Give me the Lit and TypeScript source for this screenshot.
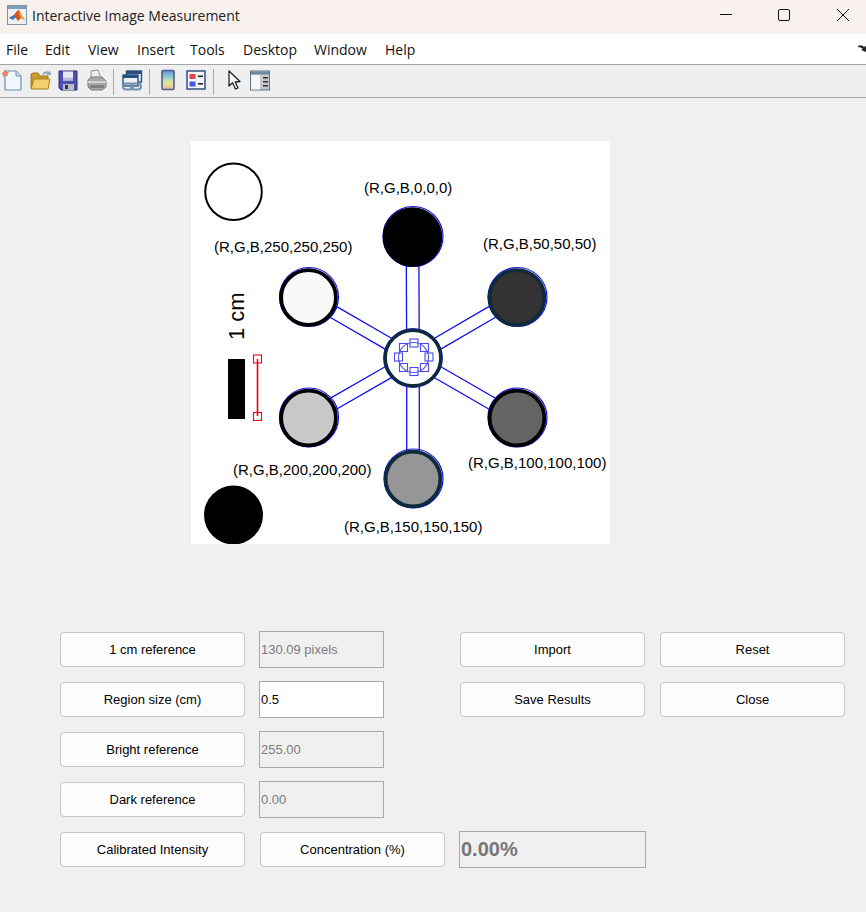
import { LitElement, css, html, svg } from "lit";
import { customElement } from "lit/decorators.js";

const MENUS = [
  ["File", 39],
  ["Edit", 43],
  ["View", 49],
  ["Insert", 53],
  ["Tools", 53],
  ["Desktop", 71],
  ["Window", 71],
  ["Help", 40],
];

const NAVY = "#0f2a3a";
const BLACK = "#000";
const HUB = { x: 413, y: 358, r: 29 };

// outer sample wells, clockwise from the top
const WELLS = [
  { x: 412.5, y: 237, r: 29.5, fill: "#000", ring: BLACK },
  { x: 517, y: 297.5, r: 29, fill: "#333", ring: NAVY },
  { x: 517, y: 418, r: 29, fill: "#646464", ring: BLACK },
  { x: 413, y: 479, r: 29, fill: "#969696", ring: NAVY },
  { x: 308.5, y: 418, r: 29, fill: "#c8c8c8", ring: BLACK },
  { x: 308.5, y: 297.5, r: 29, fill: "#f9f9f9", ring: BLACK },
];

const LABELS = [
  ["(R,G,B,0,0,0)", 364, 193],
  ["(R,G,B,250,250,250)", 214, 252],
  ["(R,G,B,50,50,50)", 483, 249],
  ["(R,G,B,100,100,100)", 468, 468],
  ["(R,G,B,200,200,200)", 233, 475],
  ["(R,G,B,150,150,150)", 344, 532],
] as const;

const HANDLES = [
  [414, 343],
  [424.5, 347.5],
  [429, 357],
  [424.5, 367.5],
  [414, 371.5],
  [403.5, 367.5],
  [398.5, 357],
  [403.5, 347.5],
];

function spokes() {
  return WELLS.flatMap((w) => {
    const dx = w.x - HUB.x;
    const dy = w.y - HUB.y;
    const len = Math.hypot(dx, dy);
    const ux = dx / len;
    const uy = dy / len;
    return [-6.3, 6.3].map((off) => {
      const ox = -uy * off;
      const oy = ux * off;
      const a = HUB.r - 1;
      const b = len - w.r + 1;
      return svg`<line x1=${HUB.x + ux * a + ox} y1=${HUB.y + uy * a + oy} x2=${HUB.x + ux * b + ox} y2=${HUB.y + uy * b + oy} stroke="#1010f0" stroke-width="1.3" />`;
    });
  });
}

function figure() {
  return html`<svg class="figure" width="419" height="403" viewBox="191 141 419 403">
    <rect x="191" y="141" width="419" height="403" fill="#fff" />
    ${spokes()}
    <circle cx="233.5" cy="191.7" r="28.3" fill="#fff" stroke="#000" stroke-width="2" />
    <circle cx="233.5" cy="515" r="29.5" fill="#000" />
    ${WELLS.map(
      (w) => svg`
        <circle cx=${w.x + 0.5} cy=${w.y - 0.5} r=${w.r + 0.5} fill="none" stroke="#1414f0" stroke-width="1.2" />
        <circle cx=${w.x} cy=${w.y} r=${w.r - 1.6} fill=${w.fill} stroke=${w.ring} stroke-width="3.8" />`
    )}
    <circle cx=${HUB.x} cy=${HUB.y} r=${HUB.r + 0.4} fill="none" stroke="#1414f0" stroke-width="1" />
    <circle cx=${HUB.x} cy=${HUB.y} r=${HUB.r - 1.2} fill="#fff" stroke=${NAVY} stroke-width="3.4" />
    <circle cx="413.5" cy="357.5" r="15" fill="none" stroke="#5a5ae0" stroke-width="1.2" />
    ${HANDLES.map(
      ([x, y]) => svg`<rect x=${x - 4} y=${y - 4} width="8" height="8" fill="none" stroke="#4a4ae6" stroke-width="1.1" />`
    )}
    <rect x="228" y="359" width="17" height="60" fill="#000" />
    <line x1="257.5" y1="359" x2="257.5" y2="416" stroke="#f00010" stroke-width="1.6" />
    <rect x="253.5" y="355" width="8" height="8" fill="none" stroke="#f00010" stroke-width="1.1" />
    <rect x="253.5" y="412.5" width="8" height="8" fill="none" stroke="#f00010" stroke-width="1.1" />
    <text class="scale" transform="translate(244 340) rotate(-90)">1 cm</text>
    ${LABELS.map(([t, x, y]) => svg`<text class="label" x=${x} y=${y}>${t}</text>`)}
  </svg>`;
}

const matlabIcon = html`<svg class="logo" width="20" height="20" viewBox="0 0 20 20">
  <rect x="0.5" y="0.5" width="19" height="19" fill="#eef2f6" stroke="#7f93a8" />
  <rect x="1" y="1" width="18" height="3" fill="#7f9cb8" />
  <path d="M2 13 L7 10 L9 7 L12 4.5 L15 11 L18 15 L14 13 L11 16 L8 12 Z" fill="#d9541e" />
  <path d="M2 13 L7 10 L9 12 L6 15 Z" fill="#3a7ab8" />
  <path d="M12 4.5 L15 11 L18 15 L14 13 L12 9 Z" fill="#f0a020" />
</svg>`;

const TOOL_ICONS = {
  file: svg`
    <path d="M5 3 H16 L21 8 V21 Q21 22 20 22 H6 Q5 22 5 21 Z" fill="#eff7fc" stroke="#6d8fb0" stroke-width="1.2" />
    <path d="M16 3 V8 H21" fill="#cfe0ee" stroke="#6d8fb0" />
    <path d="M2 5 L4 4.5 L4.5 2 L6 4 L8.5 4 L7 6 L7.5 8 L5 7 L3 8.5 L3.5 6.5 Z" fill="#f0885a" stroke="#e05a30" stroke-width="0.5" />`,
  open: svg`
    <path d="M3 7 Q3 5 5 5 H10 L12 8 H20 V20 H3 Z" fill="#c99a2e" stroke="#9d7a20" />
    <path d="M3 21 L6 11 H22 L20 21 Z" fill="#f3d06a" stroke="#a8831f" />
    <path d="M14 6 Q17 2 21 4 L22 2 L23 7 L18 7 L20 5.5 Q17 4.5 15 7 Z" fill="#8aa2b8" />`,
  save: svg`
    <path d="M3 3 H21 V22 H5 L3 20 Z" fill="#4a4fb0" stroke="#2c2f78" />
    <rect x="7" y="3.5" width="10" height="9" fill="#e9e9f4" />
    <rect x="7" y="9.5" width="10" height="3" fill="#b8bce0" />
    <rect x="7" y="16" width="11" height="6" fill="#bcbcc6" />
    <rect x="9" y="17" width="3" height="4" fill="#30303a" />`,
  print: svg`
    <path d="M7 3 L14 2 L17 10 L7 11 Z" fill="#e6eef2" stroke="#8c979f" />
    <path d="M4 12 L7 9 H18 L22 13 V19 L18 22 H7 L4 19 Z" fill="#a8a8a8" stroke="#7c7c7c" />
    <path d="M4 13 H22 V15 H4 Z" fill="#d2d2d2" />
    <path d="M6 17 H20 V20 H6 Z" fill="#808080" />`,
  link: svg`
    <rect x="6.5" y="3" width="15" height="11" fill="#dbe6f0" stroke="#2a4f7c" stroke-width="1.4" />
    <rect x="6.5" y="3" width="15" height="3" fill="#2a4f7c" />
    <rect x="3" y="7" width="15" height="11" fill="#e8eff5" stroke="#2a4f7c" stroke-width="1.4" />
    <rect x="3" y="7" width="15" height="3" fill="#2a4f7c" />
    <rect x="3" y="15.5" width="10" height="6" rx="3" fill="none" stroke="#6f8fae" stroke-width="2" />
    <rect x="11" y="15.5" width="10" height="6" rx="3" fill="none" stroke="#6f8fae" stroke-width="2" />`,
  colorbar: svg`
    <defs><linearGradient id="cb" x1="0" y1="0" x2="0" y2="1">
      <stop offset="0" stop-color="#6a88d8" /><stop offset="0.35" stop-color="#8fd0d0" />
      <stop offset="0.65" stop-color="#e6e690" /><stop offset="1" stop-color="#f0b8a0" />
    </linearGradient></defs>
    <rect x="6" y="2.5" width="12" height="19" rx="1" fill="url(#cb)" stroke="#48618c" stroke-width="1.6" />`,
  legend: svg`
    <rect x="3" y="3" width="18" height="18" fill="#f4f6f8" stroke="#3c5a88" stroke-width="1.6" />
    <rect x="5.5" y="6" width="6" height="5" fill="#e04848" />
    <rect x="5.5" y="13.5" width="6" height="5" fill="#4a54e0" />
    <rect x="14" y="7.5" width="5" height="1.6" fill="#222" />
    <rect x="14" y="15" width="5" height="1.6" fill="#222" />`,
  arrow: svg`
    <path d="M7 3 V18 L10.5 14.8 L13.5 21 L16 20 L13.2 14 L18 13.5 Z" fill="#fff" stroke="#222" stroke-width="1.3" stroke-linejoin="round" />`,
  panel: svg`
    <rect x="2.5" y="3" width="19" height="19" fill="#c4c8cc" stroke="#5f7080" />
    <rect x="3" y="3.5" width="18" height="3" fill="#6f8aa0" />
    <rect x="3" y="7" width="9" height="14.5" fill="#f6f6f6" />
    <rect x="15" y="9" width="5" height="1.5" fill="#333" />
    <rect x="15" y="13" width="5" height="1.5" fill="#333" />
    <rect x="15" y="17" width="5" height="1.5" fill="#333" />`,
};

type ToolName = keyof typeof TOOL_ICONS;

const tool = (name: ToolName) =>
  html`<svg class="tool" width="24" height="24" viewBox="0 0 24 24">${TOOL_ICONS[name]}</svg>`;

@customElement("app-root")
export class AppRoot extends LitElement {
  static styles = css`
    :host {
      display: block;
      width: 866px;
      height: 912px;
      overflow: hidden;
      background: #f0f0f0;
      font-family: "Liberation Sans", Arial, sans-serif;
      color: #000;
    }
    .titlebar {
      height: 34px;
      box-sizing: border-box;
      background: #f8f1ed;
      display: flex;
      align-items: center;
      padding: 0 17px 4px 7px;
    }
    .logo {
      flex: none;
    }
    .title {
      margin-left: 5px;
      font: 14px "Open Sans", sans-serif;
      color: #222;
      flex: 1;
    }
    .win {
      display: flex;
      align-items: center;
      gap: 46px;
    }
    .win .close {
      margin-left: 1px;
    }
    .menubar {
      height: 31px;
      box-sizing: border-box;
      background: #fff;
      border-bottom: 1px solid #a4a4a4;
      display: flex;
      align-items: center;
      padding: 0 0 0 6px;
      font: 14px "Open Sans", sans-serif;
      color: #111;
      position: relative;
    }
    .menu {
      flex: none;
    }
    .curl {
      position: absolute;
      right: 0;
      top: 10px;
    }
    .toolbar {
      height: 33px;
      box-sizing: border-box;
      background: #efefef;
      border-bottom: 1px solid #a4a4a4;
      display: flex;
      align-items: center;
      padding-bottom: 2px;
    }
    .group {
      display: flex;
      gap: 4px;
    }
    .group.tight {
      gap: 2px;
    }
    .sep {
      width: 1px;
      height: 26px;
      background: #a8a8a8;
      margin: 3px 6px 0 5px;
    }
    .sep.wide {
      margin-right: 8px;
    }
    .tool {
      display: block;
    }
    .canvas {
      padding: 43px 0 0 191px;
      height: 403px;
    }
    .figure {
      display: block;
    }
    .label {
      font: 15px "Liberation Sans", Arial, sans-serif;
      fill: #000;
    }
    .scale {
      font: 22px "Liberation Sans", Arial, sans-serif;
      fill: #000;
    }
    .controls {
      margin-top: 87px;
      padding-left: 60px;
      display: flex;
      flex-direction: column;
      gap: 14px;
    }
    .row {
      display: flex;
      align-items: center;
      height: 36px;
    }
    button {
      flex: none;
      width: 185px;
      height: 35px;
      box-sizing: border-box;
      background: #fdfdfd;
      border: 1px solid #c6c6c6;
      border-radius: 4px;
      font: 13px "Liberation Sans", Arial, sans-serif;
      color: #000;
      padding: 0;
    }
    input {
      flex: none;
      width: 125px;
      height: 37px;
      box-sizing: border-box;
      margin: 0 0 0 14px;
      padding: 0 0 0 1px;
      border: 1px solid #a8a8a8;
      border-radius: 0;
      outline: none;
      background: #f0f0f0;
      font: 13px "Liberation Sans", Arial, sans-serif;
      color: #7b7b7b;
    }
    input.live {
      background: #fff;
      color: #000;
    }
    .import {
      margin-left: 76px;
    }
    .reset {
      margin-left: 15px;
    }
    .conc {
      margin-left: 15px;
    }
    input.readout {
      width: 187px;
      font: bold 20px "Liberation Sans", Arial, sans-serif;
      color: #767676;
    }
  `;

  render() {
    return html`
      <div class="titlebar">
        ${matlabIcon}
        <div class="title">Interactive Image Measurement</div>
        <div class="win">
          <svg width="12" height="12" viewBox="0 0 12 12"><line x1="0" y1="5.5" x2="12" y2="5.5" stroke="#111" /></svg>
          <svg width="12" height="12" viewBox="0 0 12 12"><rect x="0.5" y="0.5" width="11" height="11" rx="1.5" fill="none" stroke="#111" /></svg>
          <svg class="close" width="12" height="12" viewBox="0 0 12 12"><path d="M0 0 L12 12 M12 0 L0 12" stroke="#111" /></svg>
        </div>
      </div>
      <div class="menubar">
        ${MENUS.map(([m, w]) => html`<div class="menu" style="width:${w}px">${m}</div>`)}
        <svg class="curl" width="8" height="8" viewBox="0 0 8 8"><path d="M0 2 Q4 0 6 3 L8 2 V8 L3 6 L5 5 Q3 3 0 3 Z" fill="#222" /></svg>
      </div>
      <div class="toolbar">
        <div class="group">${tool("file")}${tool("open")}${tool("save")}${tool("print")}</div>
        <div class="sep"></div>
        <div class="group">${tool("link")}</div>
        <div class="sep"></div>
        <div class="group">${tool("colorbar")}${tool("legend")}</div>
        <div class="sep wide"></div>
        <div class="group tight">${tool("arrow")}${tool("panel")}</div>
      </div>
      <div class="canvas">${figure()}</div>
      <div class="controls">
        <div class="row">
          <button>1 cm reference</button>
          <input readonly value="130.09 pixels" />
          <button class="import">Import</button>
          <button class="reset">Reset</button>
        </div>
        <div class="row">
          <button>Region size (cm)</button>
          <input class="live" value="0.5" />
          <button class="import">Save Results</button>
          <button class="reset">Close</button>
        </div>
        <div class="row">
          <button>Bright reference</button>
          <input readonly value="255.00" />
        </div>
        <div class="row">
          <button>Dark reference</button>
          <input readonly value="0.00" />
        </div>
        <div class="row">
          <button>Calibrated Intensity</button>
          <button class="conc">Concentration (%)</button>
          <input class="readout" readonly value="0.00%" />
        </div>
      </div>
    `;
  }
}
